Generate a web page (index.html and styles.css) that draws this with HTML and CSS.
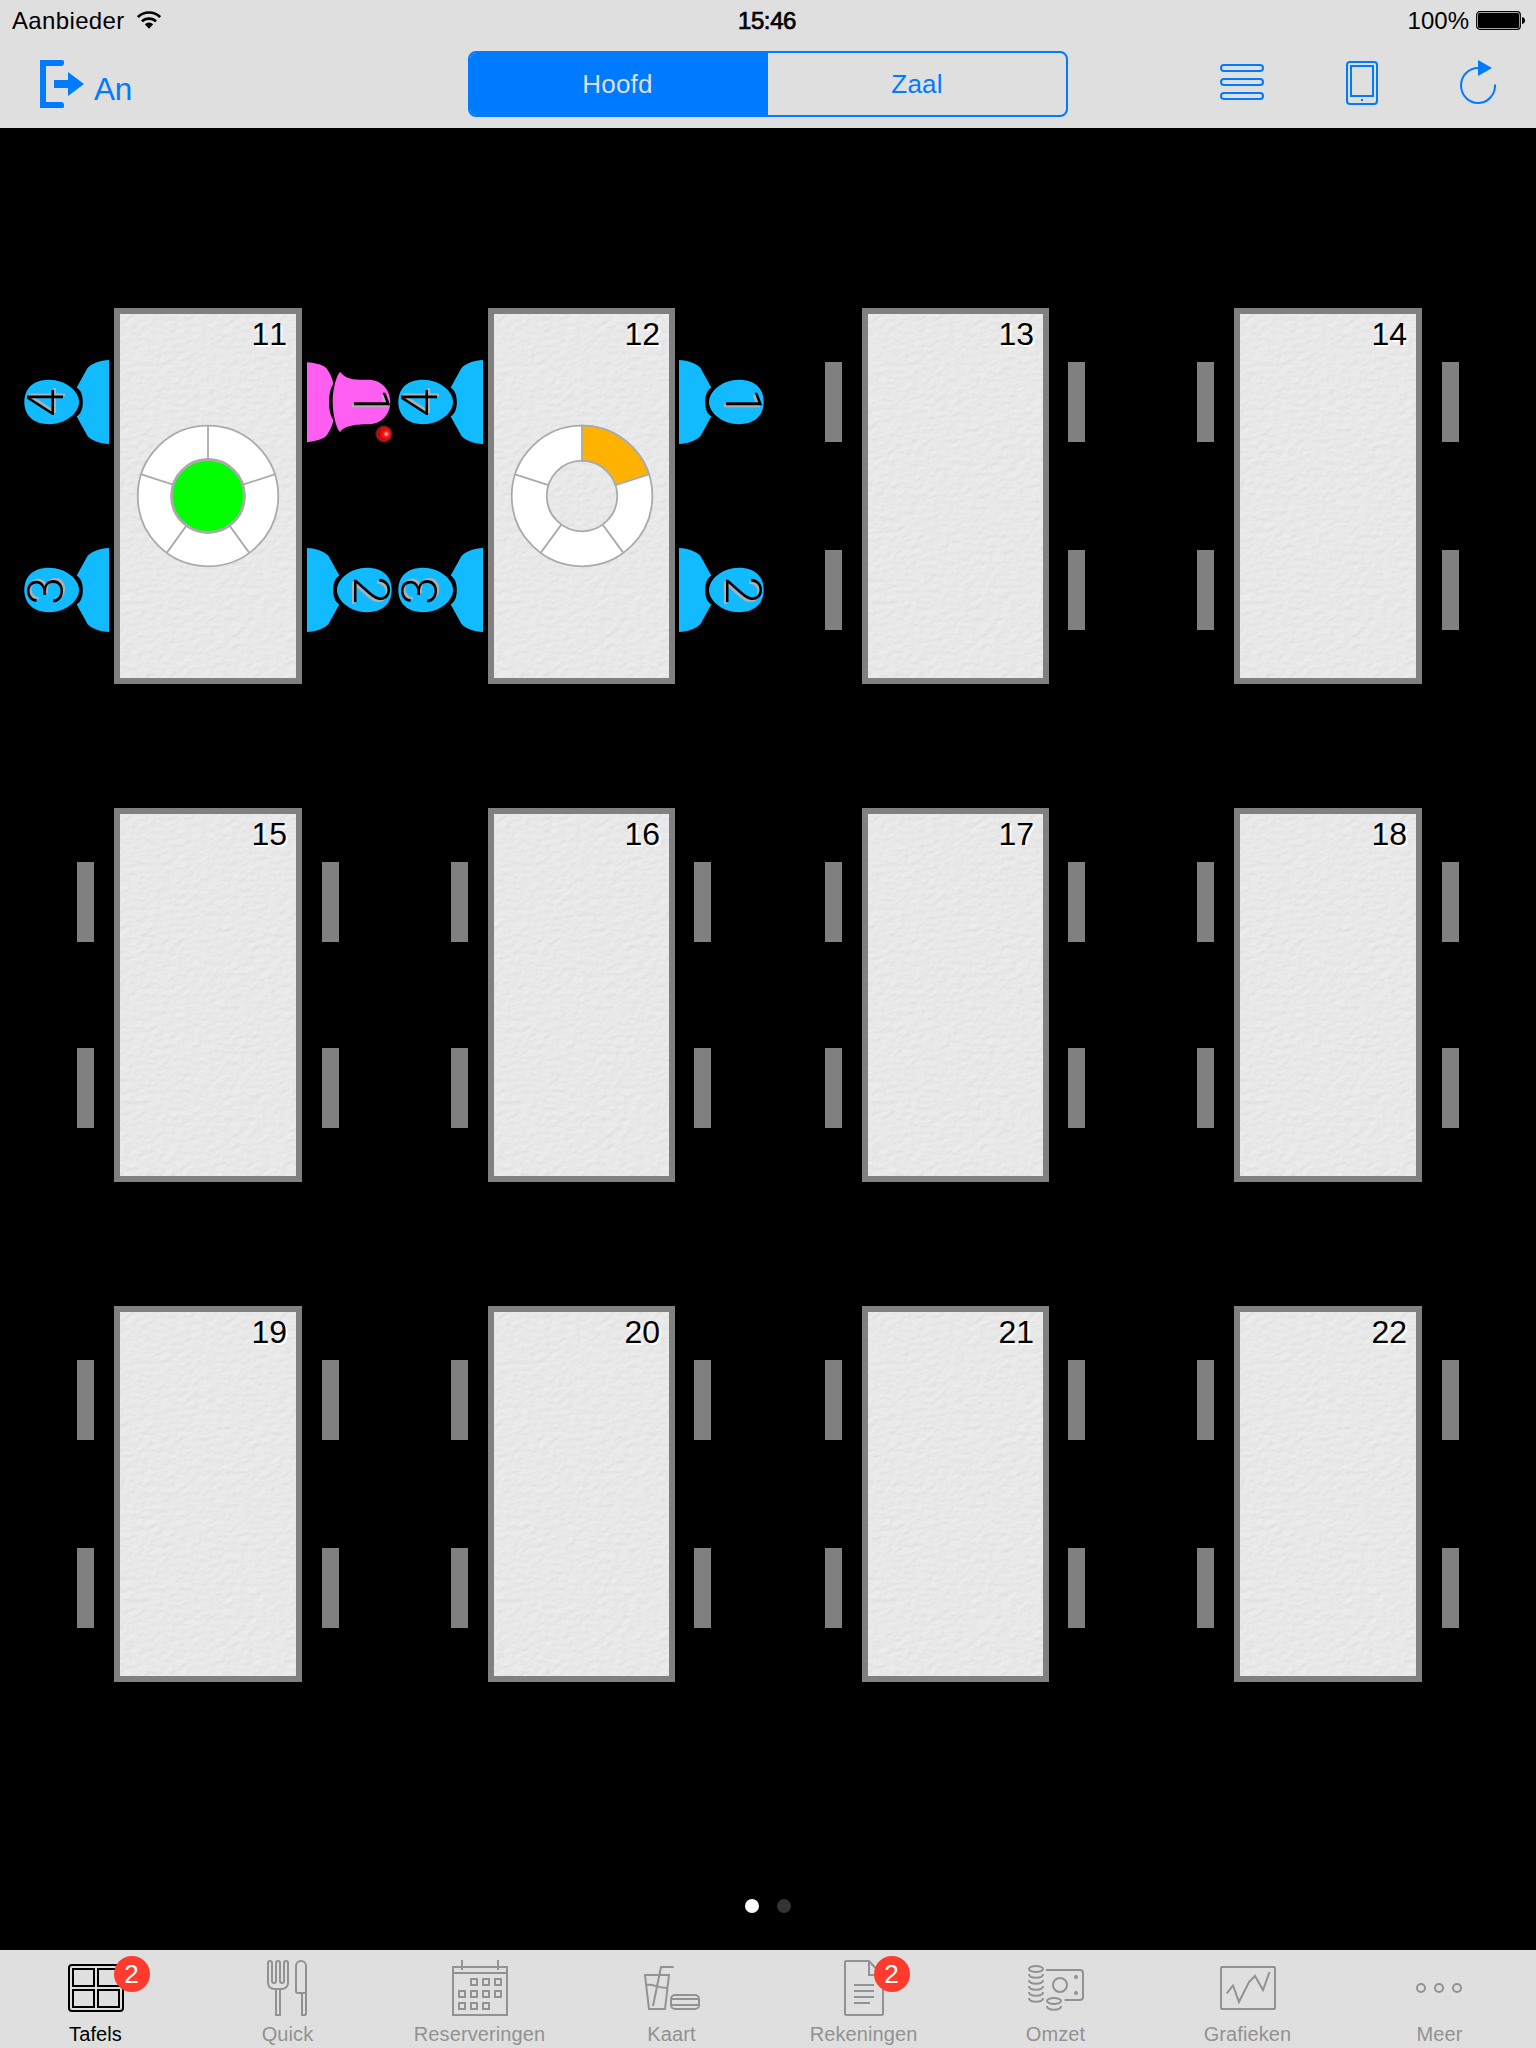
FILE: index.html
```html
<!DOCTYPE html>
<html lang="nl">
<head>
<meta charset="utf-8">
<title>Tafels</title>
<link rel="stylesheet" href="styles.css">
</head>
<body>
<svg class="defs" aria-hidden="true">
  <defs>
    <radialGradient id="bead" cx="0.68" cy="0.5" r="0.65">
      <stop offset="0" stop-color="#ffe0e0"/><stop offset="0.35" stop-color="#ff1414"/><stop offset="0.8" stop-color="#e00000"/><stop offset="1" stop-color="#a00000"/>
    </radialGradient>
    <radialGradient id="glow">
      <stop offset="0.6" stop-color="#ff5050" stop-opacity="0.8"/><stop offset="1" stop-color="#ff3030" stop-opacity="0"/>
    </radialGradient>
    <symbol id="man" viewBox="0 0 85 84">
      <path d="M85 0C76 .6 67 3.5 63.500 8L52.700 27.500C57 30.500 58.800 35 58.800 42C58.800 49 57 53.500 52.700 56.500L63.500 76C67 80.500 76 83.400 85 84Z"/>
      <path d="M.3 42C.3 28 10 19.800 25 19.800C42 19.800 55 31.500 55 42C55 52.500 42 64.200 25 64.200C10 64.200.3 56 .3 42Z"/>
    </symbol>
    <symbol id="woman" viewBox="0 0 85 84">
      <path d="M0 2.300C9 3 17 5 20 9C23 13 26 20 26.300 24C23 29 22 36 22 42C22 48 23 55 26.300 60C26 64 23 71 20 75C17 79 9 81.300 0 82.300Z"/>
      <path d="M33.300 12C37 17 43 19.700 53 19.700H61C75 19.700 83.300 30 83.300 42C83.300 54 75 64.300 61 64.300C53 64.300 37 65 33.300 72C30 70 25.700 56 25.700 42C25.700 28 30 14 33.300 12Z"/>
    </symbol>
  </defs>
</svg>

<header class="header">
  <div class="status">
    <div class="status-left">
      <span>Aanbieder</span>
      <svg width="24" height="18" viewBox="0 0 24 18" fill="none" stroke="#000" stroke-width="2.700">
        <path d="M.9 6.100A15.700 15.700 0 0 1 23.100 6.100M5 10.400A10 10 0 0 1 19 10.400"/>
        <path d="M7.800 13.300A6 6 0 0 1 16.200 13.300L12 17.700Z" fill="#000" stroke="none"/>
      </svg>
    </div>
    <div class="clock">15:46</div>
    <div class="status-right">
      <span>100%</span>
      <svg width="50" height="20" viewBox="0 0 50 20">
        <rect x=".7" y=".7" width="43.600" height="17.600" rx="3" fill="none" stroke="#000" stroke-width="1.200"/>
        <rect x="2" y="2" width="41" height="15" rx="1.500"/>
        <path d="M46 6C50 6.500 50 12.500 46 13Z"/>
      </svg>
    </div>
  </div>
  <div class="toolbar">
    <div class="signout">
      <svg width="44" height="48" viewBox="0 0 44 48" fill="#007aff">
        <path d="M0 0H22.500Q24 0 24 1.500V3Q24 6 21 6H6V42H21Q24 42 24 45V46.500Q24 48 22.500 48H0Z"/>
        <path d="M14 20H28V12L44 24L28 36V28H14Z"/>
      </svg>
      <span>An</span>
    </div>
    <div class="segments">
      <div class="segment selected">Hoofd</div>
      <div class="segment">Zaal</div>
    </div>
    <div class="tools">
      <svg width="44" height="48" viewBox="0 0 44 48" class="line blue">
        <rect x="1" y="8" width="42" height="6" rx="3"/><rect x="1" y="22" width="42" height="6" rx="3"/><rect x="1" y="36" width="42" height="6" rx="3"/>
      </svg>
      <svg width="32" height="48" viewBox="0 0 32 48" class="line blue">
        <rect x="1" y="5" width="30" height="42" rx="3"/><rect x="5" y="9" width="22" height="30"/><rect x="15" y="42" width="2" height="2" fill="#007aff" stroke="none"/>
      </svg>
      <svg width="36" height="48" viewBox="0 0 36 48" class="line blue">
        <path d="M35 27.500A17 17.500 0 1 1 18 11"/><path d="M18 3V19L32 11Z" fill="#007aff" stroke="none"/>
      </svg>
    </div>
  </div>
</header>

<main class="floor">
  <div class="tables">
    <section class="unit">
      <div class="seats left">
        <svg class="guest" viewBox="0 0 85 84"><use href="#man"/><text transform="translate(38.500 43) rotate(-90)">4</text></svg>
        <svg class="guest" viewBox="0 0 85 84"><use href="#man"/><text transform="translate(38.500 43) rotate(-90)">3</text></svg>
      </div>
      <div class="table"><span class="number">11</span>
        <svg class="wheel" viewBox="-72 -72 144 144">
          <circle r="70.300" fill="#fff"/>
          <path d="M0-36V-70M34.200-11.100L66.600-21.600M21.200 29.100L41.100 56.600M-21.200 29.100L-41.100 56.600M-34.200-11.100L-66.600-21.600"/>
          <circle r="36.500" fill="#0f0" stroke-width="2.800"/>
        </svg>
      </div>
      <div class="seats right">
        <svg class="guest pink" viewBox="0 0 85 84"><use href="#woman"/><text transform="translate(46.500 42) rotate(90)">1</text><circle cx="77" cy="74" r="9.500" fill="url(#glow)"/><circle cx="77" cy="74" r="6.300" fill="url(#bead)"/></svg>
        <svg class="guest" viewBox="0 0 85 84"><use href="#man" transform="translate(85 0) scale(-1 1)"/><text transform="translate(46.500 42) rotate(90)">2</text></svg>
      </div>
    </section>
    <section class="unit narrow">
      <div class="seats left">
        <svg class="guest" viewBox="0 0 85 84"><use href="#man"/><text transform="translate(38.500 43) rotate(-90)">4</text></svg>
        <svg class="guest" viewBox="0 0 85 84"><use href="#man"/><text transform="translate(38.500 43) rotate(-90)">3</text></svg>
      </div>
      <div class="table"><span class="number">12</span>
        <svg class="wheel" viewBox="-72 -72 144 144">
          <path d="M0-70.300A70.300 70.300 0 1 1 0 70.300A70.300 70.300 0 1 1 0-70.300ZM0-35.300A35.300 35.300 0 1 0 0 35.300A35.300 35.300 0 1 0 0-35.300Z" fill="#fff"/>
          <path d="M0-35.300V-70.300A70.300 70.300 0 0 1 66.900-21.700L33.600-10.900A35.300 35.300 0 0 0 0-35.300Z" fill="#ffb300"/>
          <path d="M20.700 28.600L41.300 56.900M-20.700 28.600L-41.300 56.900M-33.600-10.900L-66.900-21.700"/>
        </svg>
      </div>
      <div class="seats right">
        <svg class="guest" viewBox="0 0 85 84"><use href="#man" transform="translate(85 0) scale(-1 1)"/><text transform="translate(46.500 42) rotate(90)">1</text></svg>
        <svg class="guest" viewBox="0 0 85 84"><use href="#man" transform="translate(85 0) scale(-1 1)"/><text transform="translate(46.500 42) rotate(90)">2</text></svg>
      </div>
    </section>
    <section class="unit narrow">
      <div class="seats left"><i class="chair"></i><i class="chair"></i></div>
      <div class="table"><span class="number">13</span></div>
      <div class="seats right"><i class="chair"></i><i class="chair"></i></div>
    </section>
    <section class="unit">
      <div class="seats left"><i class="chair"></i><i class="chair"></i></div>
      <div class="table"><span class="number">14</span></div>
      <div class="seats right"><i class="chair"></i><i class="chair"></i></div>
    </section>

    <section class="unit short">
      <div class="seats left"><i class="chair"></i><i class="chair"></i></div>
      <div class="table"><span class="number">15</span></div>
      <div class="seats right"><i class="chair"></i><i class="chair"></i></div>
    </section>
    <section class="unit short narrow">
      <div class="seats left"><i class="chair"></i><i class="chair"></i></div>
      <div class="table"><span class="number">16</span></div>
      <div class="seats right"><i class="chair"></i><i class="chair"></i></div>
    </section>
    <section class="unit short narrow">
      <div class="seats left"><i class="chair"></i><i class="chair"></i></div>
      <div class="table"><span class="number">17</span></div>
      <div class="seats right"><i class="chair"></i><i class="chair"></i></div>
    </section>
    <section class="unit short">
      <div class="seats left"><i class="chair"></i><i class="chair"></i></div>
      <div class="table"><span class="number">18</span></div>
      <div class="seats right"><i class="chair"></i><i class="chair"></i></div>
    </section>

    <section class="unit">
      <div class="seats left"><i class="chair"></i><i class="chair"></i></div>
      <div class="table"><span class="number">19</span></div>
      <div class="seats right"><i class="chair"></i><i class="chair"></i></div>
    </section>
    <section class="unit narrow">
      <div class="seats left"><i class="chair"></i><i class="chair"></i></div>
      <div class="table"><span class="number">20</span></div>
      <div class="seats right"><i class="chair"></i><i class="chair"></i></div>
    </section>
    <section class="unit narrow">
      <div class="seats left"><i class="chair"></i><i class="chair"></i></div>
      <div class="table"><span class="number">21</span></div>
      <div class="seats right"><i class="chair"></i><i class="chair"></i></div>
    </section>
    <section class="unit">
      <div class="seats left"><i class="chair"></i><i class="chair"></i></div>
      <div class="table"><span class="number">22</span></div>
      <div class="seats right"><i class="chair"></i><i class="chair"></i></div>
    </section>
  </div>
  <div class="pager"><i class="dot current"></i><i class="dot"></i></div>
</main>

<nav class="tabs">
  <div class="tab active">
    <div class="icon">
      <svg class="line" viewBox="0 0 56 56"><rect x="1" y="5" width="54" height="46" rx="3"/><path d="M5 9H26V26H5ZM30 9H51V26H30ZM5 30H26V47H5ZM30 30H51V47H30Z"/></svg>
      <span class="badge">2</span>
    </div>
    <span class="label">Tafels</span>
  </div>
  <div class="tab">
    <div class="icon"><svg class="line" viewBox="0 0 56 56"><path d="M8 23V3A2 2 0 0 1 12 3V21A2 2 0 0 0 16 21V3A2 2 0 0 1 20 3V21A2 2 0 0 0 24 21V3A2 2 0 0 1 28 3V23A6 6 0 0 1 22 29H14A6 6 0 0 1 8 23ZM16 29V55H20V29M46 55V6A5 5 0 0 0 36 6V31Q36 33 38 33H46M42 33V55H46"/></svg></div>
    <span class="label">Quick</span>
  </div>
  <div class="tab">
    <div class="icon"><svg class="line" viewBox="0 0 56 56"><path d="M1 7H55V55H1ZM1 13H55M10 0V10M46 0V10"/><path d="M19 19h6v6h-6zM31 19h6v6h-6zM43 19h6v6h-6zM7 31h6v6h-6zM19 31h6v6h-6zM31 31h6v6h-6zM43 31h6v6h-6zM7 43h6v6h-6zM19 43h6v6h-6zM31 43h6v6h-6z"/></svg></div>
    <span class="label">Reserveringen</span>
  </div>
  <div class="tab">
    <div class="icon"><svg class="line" viewBox="0 0 56 56"><path d="M1 15H25L21 49H5ZM2 25C9 23.500 14 28 24 28M29.700 7H17L9 46"/><rect x="27" y="35" width="28" height="14" rx="4"/><path d="M27 39H55M27 45H55"/></svg></div>
    <span class="label">Kaart</span>
  </div>
  <div class="tab">
    <div class="icon">
      <svg class="line" viewBox="0 0 56 56"><path d="M10 1H33L47 16V54Q47 55 46 55H10Q9 55 9 54V2Q9 1 10 1ZM33 1V15H46M18 25H38M18 31H38M18 37H38M18 43H34"/></svg>
      <span class="badge inset">2</span>
    </div>
    <span class="label">Rekeningen</span>
  </div>
  <div class="tab">
    <div class="icon"><svg class="line" viewBox="0 0 56 56"><ellipse cx="8" cy="9" rx="7" ry="3"/><path d="M1 14C1 19 15 19 15 14M1 20C1 25 15 25 15 20M1 26C1 31 15 31 15 26M1 32C1 37 15 37 15 32M1 38C1 43 15 43 15 38M18 10H52Q55 10 55 13V37Q55 40 52 40H36.500M19 46C19 51 33 51 33 46"/><circle cx="32" cy="25" r="7"/><ellipse cx="26" cy="41" rx="7" ry="3"/><circle class="solid" cx="48" cy="17" r="2"/><circle class="solid" cx="48" cy="33" r="2"/></svg></div>
    <span class="label">Omzet</span>
  </div>
  <div class="tab">
    <div class="icon"><svg class="line" viewBox="0 0 56 56"><rect x="1" y="7" width="54" height="42" rx="1"/><path d="M6.700 33.500L13 25.500L19 42L29 22L35 16L43 30L49.500 12"/></svg></div>
    <span class="label">Grafieken</span>
  </div>
  <div class="tab">
    <div class="icon"><svg class="line" viewBox="0 0 56 56"><circle cx="9" cy="28" r="4"/><circle cx="27" cy="28" r="4"/><circle cx="45" cy="28" r="4"/></svg></div>
    <span class="label">Meer</span>
  </div>
</nav>
</body>
</html>
```
FILE: styles.css
```css
* { box-sizing: border-box; }

body {
  margin: 0;
  width: 1536px;
  height: 2048px;
  display: flex;
  flex-direction: column;
  background: #000;
  color: #000;
  font-family: "Liberation Sans", Arial, sans-serif;
  overflow: hidden;
}

svg { display: block; flex: none; }
.defs { width: 0; height: 0; position: absolute; }
.line { fill: none; stroke: currentColor; stroke-width: 2; }
.blue { color: #007aff; }
.solid { fill: currentColor; stroke: none; }

/* Status bar and toolbar */
.header { height: 128px; background: #dfdfdf; flex: none; }

.status {
  height: 40px;
  padding: 1px 10px 0 12px;
  display: grid;
  grid-template-columns: 1fr auto 1fr;
  align-items: center;
  font-size: 24px;
  letter-spacing: 0.35px;
}
.status-left, .status-right { display: flex; align-items: center; }
.status-left { gap: 12px; }
.status-left svg { margin-bottom: 2px; }
.status-right { justify-content: flex-end; gap: 7px; letter-spacing: 0; }
.clock {
  padding-right: 4px;
  font-size: 24px;
  letter-spacing: -0.4px;
  -webkit-text-stroke: 0.7px #000;
}

.toolbar {
  height: 88px;
  padding: 11px 40px 0;
  display: grid;
  grid-template-columns: 1fr 600px 1fr;
}
.signout {
  display: flex;
  gap: 10px;
  padding-top: 9px;
  height: 66px;
  color: #007aff;
  font-size: 31.5px;
  line-height: 36px;
}
.signout span { padding-top: 11px; letter-spacing: -0.3px; }

.segments {
  height: 66px;
  display: grid;
  grid-template-columns: 298px 298px;
  border: 2px solid #007aff;
  border-radius: 8px;
  overflow: hidden;
}
.segment {
  display: flex;
  align-items: center;
  justify-content: center;
  color: #007aff;
  font-size: 26px;
  letter-spacing: 0.2px;
}
.segment.selected {
  padding-right: 3px;
  background: #007aff;
  color: #dfdfdf;
}

.tools { display: flex; justify-content: flex-end; gap: 82px; padding-top: 6px; }

/* Floor plan */
.floor {
  height: 1822px;
  flex: none;
  display: flex;
  flex-direction: column;
  justify-content: space-between;
  align-items: center;
  padding: 180px 0 37px;
}
.tables {
  width: 1536px;
  padding-left: 21px;
  display: grid;
  grid-template-columns: 374px 374px 372px 374px;
  grid-template-rows: 500px 498px 376px;
  align-items: start;
}
.unit { display: grid; grid-template-columns: 93px 188px 93px; height: 376px; }
.unit.narrow { grid-template-columns: 93px 187px 93px; }
.unit.short { height: 374px; }

.seats { display: flex; flex-direction: column; gap: 108px; padding: 54px 20px 0; }
.short .seats { gap: 106px; }
.seats.left { align-items: flex-end; }
.seats.right { align-items: flex-start; }
.narrow .seats.right { padding-left: 19px; }
.seats:has(.guest) { gap: 104px; padding: 52px 5px 0; }
.narrow .seats.right:has(.guest) { padding-left: 4px; }

.chair { width: 17px; height: 80px; background: #808080; }
.guest { width: 85px; height: 84px; fill: #12baff; overflow: visible; }
.guest.pink { fill: #ff5ff0; }
.guest text {
  fill: #000;
  font: 300 50px Roboto, "Liberation Sans", sans-serif;
  text-anchor: middle;
  text-shadow: 2px 2px 0 #b0b0b0;
}

.table {
  display: grid;
  border: 6px solid #808080;
  background: #e9e9e9 url("data:image/svg+xml,%3Csvg xmlns='http://www.w3.org/2000/svg' width='176' height='364'%3E%3Cfilter id='p' x='0' y='0' width='1' height='1' color-interpolation-filters='sRGB'%3E%3CfeTurbulence type='fractalNoise' baseFrequency='.13 .18' numOctaves='2' seed='4'/%3E%3CfeDiffuseLighting lighting-color='white' surfaceScale='.7' diffuseConstant='1'%3E%3CfeDistantLight azimuth='55' elevation='66'/%3E%3C/feDiffuseLighting%3E%3C/filter%3E%3Crect width='176' height='364' fill='%23e9e9e9'/%3E%3Crect width='176' height='364' filter='url(%23p)' opacity='.3'/%3E%3C/svg%3E");
}
.table > * { grid-area: 1 / 1; }
.number {
  justify-self: end;
  align-self: start;
  padding: 2px 9px 0 0;
  font-size: 32px;
  font-kerning: none;
  line-height: 37px;
  text-shadow: 2px 2px 0 #fff;
}
.wheel {
  width: 144px;
  height: 144px;
  place-self: center;
  fill: none;
  stroke: #aaa;
  stroke-width: 1.800;
}

.pager { display: flex; gap: 18px; }
.dot { width: 14px; height: 14px; border-radius: 50%; background: #333; }
.dot.current { background: #fff; }

/* Tab bar */
.tabs { height: 98px; flex: none; display: flex; background: #dfdfdf; }
.tab {
  width: 192px;
  padding-top: 10px;
  display: flex;
  flex-direction: column;
  align-items: center;
  color: #929292;
  font-size: 20px;
  line-height: 24px;
  letter-spacing: 0.1px;
}
.tab.active { color: #000; }
.label { padding-right: 1px; }
.icon { position: relative; width: 56px; height: 56px; margin-bottom: 6px; }
.icon svg { width: 56px; height: 56px; }
.badge {
  position: absolute;
  left: 46px;
  top: -4px;
  width: 36px;
  height: 36px;
  border-radius: 50%;
  background: #ff3b30;
  color: #fff;
  font-size: 26px;
  line-height: 36px;
  text-align: center;
  padding-right: 1px;
}
.badge.inset { left: 38px; }
```
